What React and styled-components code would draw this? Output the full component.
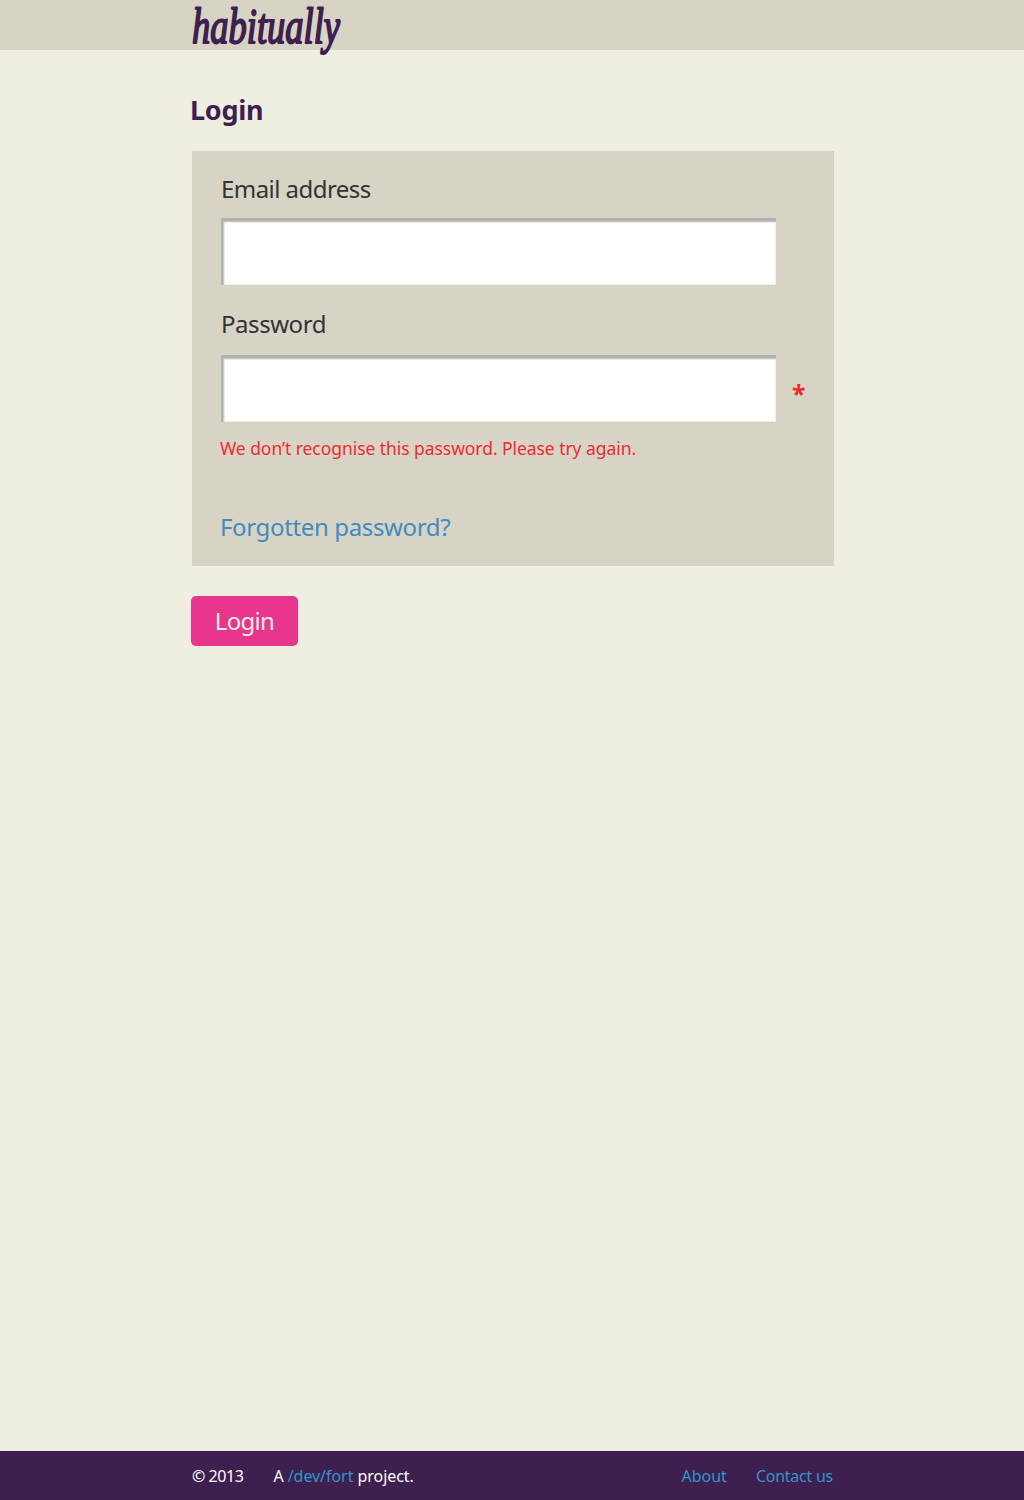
import React from "react";
import styled, { createGlobalStyle } from "styled-components";

const color = {
  page: "#f0ede1",
  stone: "#d7d4c5",
  plum: "#3e1f4f",
  ink: "#333333",
  link: "#428bbf",
  footerLink: "#2f95cc",
  error: "#ee2a32",
  pink: "#e8368f",
};

const GlobalStyle = createGlobalStyle`
  * { box-sizing: border-box; }
  body {
    margin: 0;
    background: ${color.page};
    color: ${color.ink};
    font-family: "Noto Sans", "Open Sans", sans-serif;
  }
`;

const Page = styled.div`
  display: flex;
  flex-direction: column;
  min-height: 1500px;
`;

const Container = styled.div`
  width: 642px;
  margin-left: 192px;
`;

const Header = styled.header`
  height: 50px;
  background: ${color.stone};
`;

const Logo = styled.svg`
  display: block;
  overflow: visible;
  margin-left: -1px;
  fill: ${color.plum};
  stroke: ${color.plum};
  stroke-width: 2px;
  stroke-linejoin: round;
  font-family: "Liberation Serif", serif;
  font-style: italic;
  font-size: 50px;
`;

const Main = styled(Container).attrs({ as: "main" })`
  flex: 1;
  padding-top: 41px;
`;

const Title = styled.h1`
  margin: 0 0 23px -2px;
  color: ${color.plum};
  font-size: 27px;
  line-height: 37px;
  font-weight: 700;
  letter-spacing: -0.25px;
`;

const Panel = styled.div`
  display: flex;
  flex-direction: column;
  height: 415px;
  padding: 22px 29px 23px;
  background: ${color.stone};
`;

const Field = styled.div`
  display: flex;
  flex-direction: column;
  gap: ${(p) => p.$gap}px;
  & + & { margin-top: 23px; }
`;

const Label = styled.label`
  font-size: 24px;
  line-height: 32px;
  letter-spacing: ${(p) => p.$tracking}px;
`;

const Control = styled.div`
  display: flex;
  align-items: center;
  gap: 16px;
`;

const Input = styled.input`
  flex: none;
  width: 555px;
  height: 67px;
  padding: 4px 16px;
  border: 0;
  border-radius: 0;
  outline: 0;
  background: #fff;
  font: inherit;
  font-size: 24px;
  box-shadow:
    inset 2px 3px 0 #b1b1b0,
    inset 3px 4px 0 #c8c8c8,
    inset 4px 5px 0 #ebebeb,
    inset -1px -1px 0 #f1f0ec;
`;

const Required = styled.span`
  height: 26px;
  color: ${color.error};
  font-size: 25px;
  line-height: 35px;
  font-weight: 700;
`;

const ErrorText = styled.p`
  margin: 14px 0 0 -1px;
  color: ${color.error};
  font-size: 17.5px;
  line-height: 24px;
  letter-spacing: -0.06px;
`;

const ForgottenLink = styled.a`
  margin: auto 0 0 -1px;
  color: ${color.link};
  font-size: 24px;
  line-height: 32px;
  letter-spacing: -0.36px;
  text-decoration: none;
`;

const Button = styled.button`
  display: block;
  width: 107px;
  height: 50px;
  margin: 30px 0 0 -1px;
  padding: 0;
  border: 0;
  border-radius: 5px;
  background: ${color.pink};
  color: ${color.page};
  font: inherit;
  font-size: 24px;
  line-height: 50px;
  letter-spacing: -0.7px;
`;

const Footer = styled.footer`
  height: 49px;
  background: ${color.plum};
  color: #fff;
  font-size: 16px;
  line-height: 50px;
`;

const FooterRow = styled(Container)`
  display: flex;
  align-items: center;
  gap: 30px;
  padding-right: 1px;
`;

const FooterText = styled.span`
  letter-spacing: ${(p) => p.$tracking || 0}px;
`;

const FooterNav = styled.nav`
  display: flex;
  gap: 29px;
  margin-left: auto;
`;

const FooterLink = styled.a`
  color: ${color.footerLink};
  letter-spacing: ${(p) => p.$tracking || 0}px;
  text-decoration: none;
`;

export default function App() {
  return (
    <Page>
      <GlobalStyle />
      <Header>
        <Container>
          <Logo width="150" height="60" role="img" aria-label="habitually">
            <text x="1" y="43" textLength="148" lengthAdjust="spacingAndGlyphs">habitually</text>
          </Logo>
        </Container>
      </Header>
      <Main>
        <Title>Login</Title>
        <Panel>
          <Field $gap={13}>
            <Label htmlFor="email" $tracking={-0.55}>Email address</Label>
            <Input id="email" type="email" />
          </Field>
          <Field $gap={15}>
            <Label htmlFor="password" $tracking={-0.45}>Password</Label>
            <Control>
              <Input id="password" type="password" />
              <Required>*</Required>
            </Control>
          </Field>
          <ErrorText>We don’t recognise this password. Please try again.</ErrorText>
          <ForgottenLink>Forgotten password?</ForgottenLink>
        </Panel>
        <Button type="button">Login</Button>
      </Main>
      <Footer>
        <FooterRow>
          <FooterText $tracking={-0.45}>© 2013</FooterText>
          <FooterText $tracking={-0.05}>
            A <FooterLink $tracking={-0.05}>/dev/fort</FooterLink> project.
          </FooterText>
          <FooterNav>
            <FooterLink>About</FooterLink>
            <FooterLink $tracking={-0.25}>Contact us</FooterLink>
          </FooterNav>
        </FooterRow>
      </Footer>
    </Page>
  );
}
